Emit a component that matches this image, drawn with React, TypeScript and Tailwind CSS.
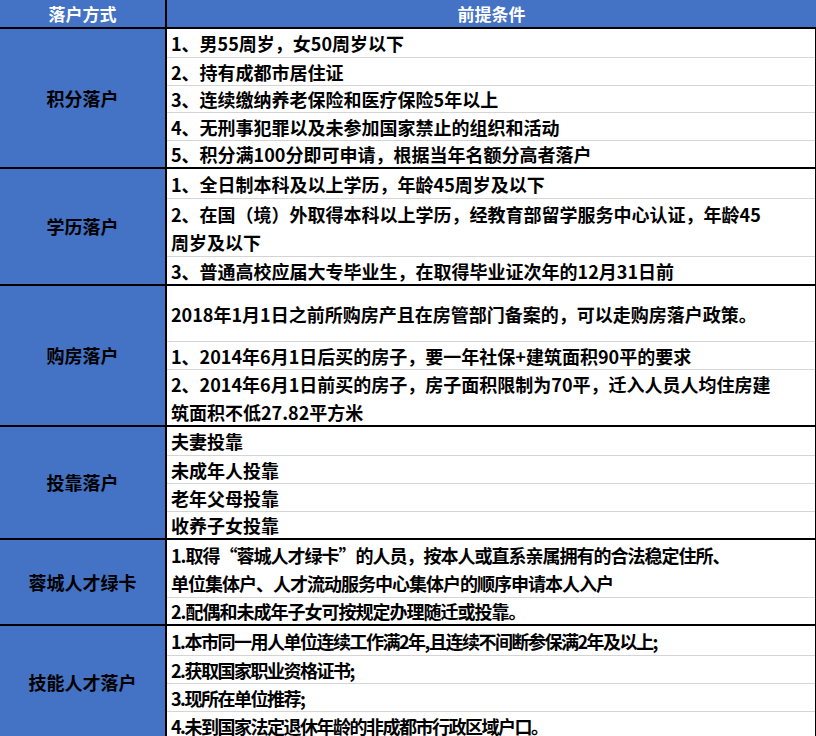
const sections: { name: string; size: string; rows: { text: string; h: number }[] }[] = [
  {
    name: "积分落户",
    size: "text-[18px]",
    rows: [
      { text: "1、男55周岁，女50周岁以下", h: 28 },
      { text: "2、持有成都市居住证", h: 28 },
      { text: "3、连续缴纳养老保险和医疗保险5年以上", h: 27 },
      { text: "4、无刑事犯罪以及未参加国家禁止的组织和活动", h: 28 },
      { text: "5、积分满100分即可申请，根据当年名额分高者落户", h: 27 },
    ],
  },
  {
    name: "学历落户",
    size: "text-[18px]",
    rows: [
      { text: "1、全日制本科及以上学历，年龄45周岁及以下", h: 29 },
      { text: "2、在国（境）外取得本科以上学历，经教育部留学服务中心认证，年龄45\n周岁及以下", h: 58 },
      { text: "3、普通高校应届大专毕业生，在取得毕业证次年的12月31日前", h: 28 },
    ],
  },
  {
    name: "购房落户",
    size: "text-[18px]",
    rows: [
      { text: "2018年1月1日之前所购房产且在房管部门备案的，可以走购房落户政策。", h: 55 },
      { text: "1、2014年6月1日后买的房子，要一年社保+建筑面积90平的要求", h: 28 },
      { text: "2、2014年6月1日前买的房子，房子面积限制为70平，迁入人员人均住房建\n筑面积不低27.82平方米", h: 56 },
    ],
  },
  {
    name: "投靠落户",
    size: "text-[18px]",
    rows: [
      { text: "夫妻投靠", h: 28 },
      { text: "未成年人投靠", h: 28 },
      { text: "老年父母投靠", h: 28 },
      { text: "收养子女投靠", h: 27 },
    ],
  },
  {
    name: "蓉城人才绿卡",
    size: "text-[18px] tracking-[-1px]",
    rows: [
      { text: "1.取得“蓉城人才绿卡”的人员，按本人或直系亲属拥有的合法稳定住所、\n单位集体户、人才流动服务中心集体户的顺序申请本人入户", h: 57 },
      { text: "2.配偶和未成年子女可按规定办理随迁或投靠。", h: 27 },
    ],
  },
  {
    name: "技能人才落户",
    size: "text-[18px] tracking-[-1.5px]",
    rows: [
      { text: "1.本市同一用人单位连续工作满2年,且连续不间断参保满2年及以上;", h: 29 },
      { text: "2.获取国家职业资格证书;", h: 28 },
      { text: "3.现所在单位推荐;", h: 28 },
      { text: "4.未到国家法定退休年龄的非成都市行政区域户口。", h: 28 },
    ],
  },
];

export default function App() {
  return (
    <div
      className="w-[816px] h-[736px] overflow-hidden bg-white text-black font-bold"
      style={{ fontFamily: '"Noto Sans CJK SC", "Liberation Sans", sans-serif' }}
    >
      <div className="flex h-[29px] bg-[#4472c4] text-white text-[17px] border-b-2 border-black">
        <div className="w-[167px] flex items-center justify-center border-r-2 border-black">落户方式</div>
        <div className="flex-1 flex items-center justify-center">前提条件</div>
      </div>
      {sections.map((s) => (
        <div key={s.name} className="flex border-b-2 border-black">
          <div className="w-[167px] shrink-0 bg-[#4472c4] flex items-center justify-center border-r-2 border-black text-[18px]">
            {s.name}
          </div>
          <div className="flex-1 flex flex-col border-r border-black">
            {s.rows.map((r, i) => (
              <div
                key={i}
                className={`flex items-center px-[4px] whitespace-pre-line leading-[28px] ${s.size} ${i > 0 ? "border-t border-[#d4d4d4]" : ""}`}
                style={{ height: r.h }}
              >
                {r.text}
              </div>
            ))}
          </div>
        </div>
      ))}
    </div>
  );
}
